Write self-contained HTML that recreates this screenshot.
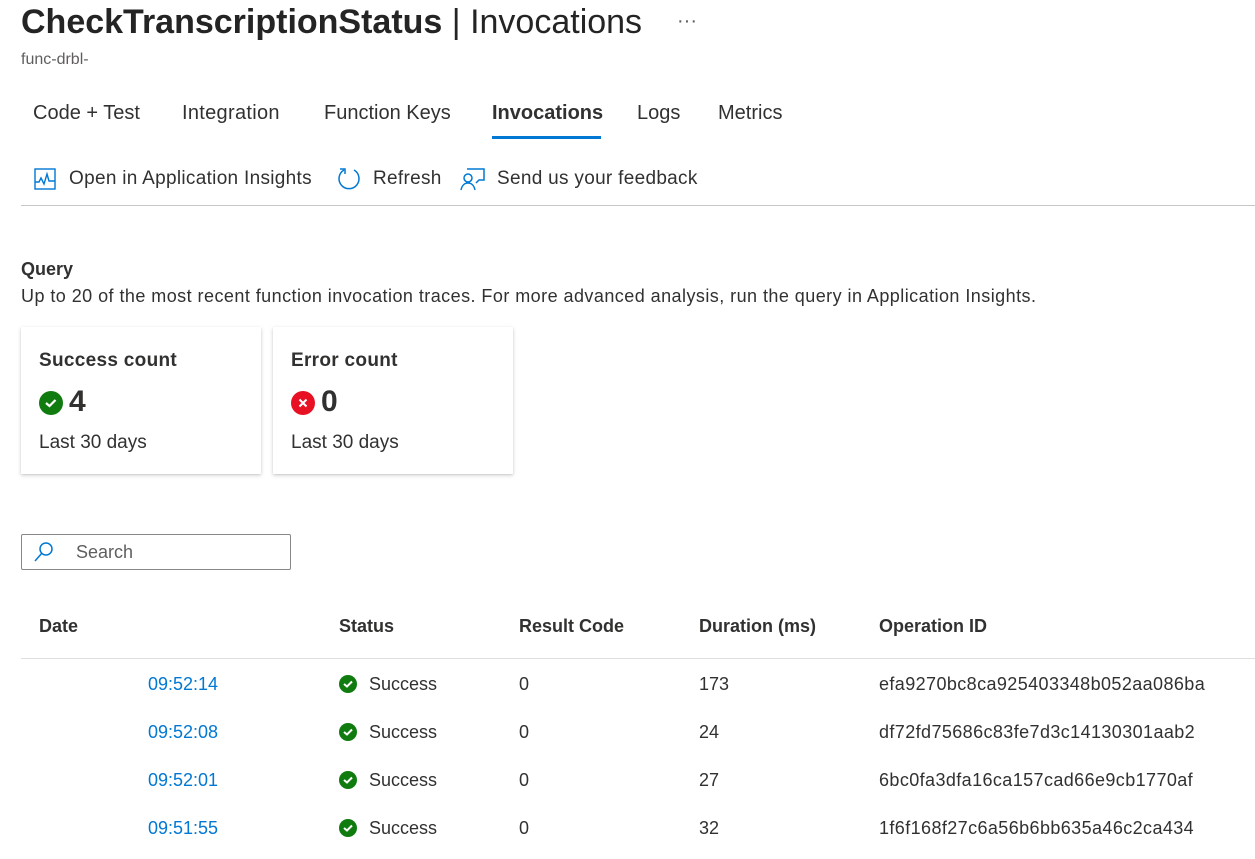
<!DOCTYPE html>
<html><head><style>
body{margin:0;width:1255px;height:859px;overflow:hidden;background:#fff;font-family:"Liberation Sans",sans-serif;color:#323130;position:relative}
.a{position:absolute;white-space:nowrap}
.card{position:absolute;top:327px;width:240px;height:147px;background:#fff;box-shadow:0 1.6px 4px rgba(0,0,0,.18),0 0.3px 1px rgba(0,0,0,.1)}
.t{font-size:19px;letter-spacing:0.3px}
.link{color:#0078d4}
</style></head><body>
<div class="a" style="left:21px;top:3px;font-size:34px;color:#242424"><b style="font-weight:600">CheckTranscriptionStatus</b> | Invocations</div>
<div class="a" style="left:677px;top:10px;font-size:20px;color:#605e5c">···</div>
<div class="a" style="left:21px;top:51px;font-size:16px;color:#605e5c">func-drbl-</div>
<div class="a" style="left:33px;top:102px;font-size:20px">Code + Test</div>
<div class="a" style="left:182px;top:102px;font-size:20px;letter-spacing:0.3px">Integration</div>
<div class="a" style="left:324px;top:102px;font-size:20px">Function Keys</div>
<div class="a" style="left:492px;top:102px;font-size:20px;font-weight:bold">Invocations</div>
<div style="position:absolute;left:492px;top:136px;width:109px;height:3px;background:#0078d4"></div>
<div class="a" style="left:637px;top:102px;font-size:20px">Logs</div>
<div class="a" style="left:718px;top:102px;font-size:20px">Metrics</div>
<svg class="a" style="left:33px;top:167px" width="24" height="24" viewBox="0 0 24 24" fill="none" stroke="#0078d4" stroke-width="1.4"><rect x="2" y="2" width="20" height="20"/><path d="M2 15h4l2-4 3 6 3-10 2 7h6"/></svg>
<div class="a t" style="left:69px;top:168px">Open in Application Insights</div>
<svg class="a" style="left:335px;top:165px" width="28" height="28" viewBox="0 0 28 28" fill="none" stroke="#0078d4" stroke-width="1.5"><path d="M9 5A10 10 0 1 0 19 5"/><path d="M5 4h5v5"/></svg>
<div class="a t" style="left:373px;top:168px">Refresh</div>
<svg class="a" style="left:458px;top:166px" width="28" height="26" viewBox="0 0 28 26" fill="none" stroke="#0078d4" stroke-width="1.5"><circle cx="10" cy="12" r="4"/><path d="M3 24c1-5 4-7 7-7s6 2 7 7"/><path d="M9 3h17v11h-5l-3 3"/></svg>
<div class="a t" style="left:497px;top:168px">Send us your feedback</div>
<div style="position:absolute;left:21px;top:205px;width:1234px;height:1px;background:#c8c6c4"></div>
<div class="a" style="left:21px;top:259px;font-size:18px;font-weight:bold">Query</div>
<div class="a" style="left:21px;top:286px;font-size:18px;letter-spacing:0.45px">Up to 20 of the most recent function invocation traces. For more advanced analysis, run the query in Application Insights.</div>
<div class="card" style="left:21px">
<div class="a" style="left:18px;top:23px;font-size:19px;font-weight:bold;letter-spacing:0.3px">Success count</div>
<svg class="a" style="left:18px;top:64px" width="24" height="24"><circle cx="12" cy="12" r="12" fill="#107c10"/><path d="M7 12l3.5 3 6-6" stroke="#fff" stroke-width="2.2" fill="none"/></svg>
<div class="a" style="left:48px;top:58px;font-size:30px;font-weight:bold">4</div>
<div class="a" style="left:18px;top:105px;font-size:19px">Last 30 days</div></div>
<div class="card" style="left:273px">
<div class="a" style="left:18px;top:23px;font-size:19px;font-weight:bold;letter-spacing:0.3px">Error count</div>
<svg class="a" style="left:18px;top:64px" width="24" height="24"><circle cx="12" cy="12" r="12" fill="#e81123"/><path d="M8.5 8.5l7 7M15.5 8.5l-7 7" stroke="#fff" stroke-width="2"/></svg>
<div class="a" style="left:48px;top:58px;font-size:30px;font-weight:bold">0</div>
<div class="a" style="left:18px;top:105px;font-size:19px">Last 30 days</div></div>
<div style="position:absolute;left:21px;top:534px;width:268px;height:34px;border:1px solid #8a8886;border-radius:2px"></div>
<svg class="a" style="left:33px;top:541px" width="22" height="22" fill="none" stroke="#0078d4" stroke-width="1.5"><circle cx="13" cy="8" r="6"/><path d="M9 12l-7 8"/></svg>
<div class="a" style="left:76px;top:542px;font-size:18px;color:#605e5c">Search</div>
<div class="a" style="left:39px;top:616px;font-size:18px;font-weight:bold">Date</div>
<div class="a" style="left:339px;top:616px;font-size:18px;font-weight:bold">Status</div>
<div class="a" style="left:519px;top:616px;font-size:18px;font-weight:bold">Result Code</div>
<div class="a" style="left:699px;top:616px;font-size:18px;font-weight:bold">Duration (ms)</div>
<div class="a" style="left:879px;top:616px;font-size:18px;font-weight:bold">Operation ID</div>
<div style="position:absolute;left:21px;top:658px;width:1234px;height:1px;background:#e1dfdd"></div>
<div class="a link" style="left:148px;top:674px;font-size:18px">09:52:14</div>
<div class="a link" style="left:148px;top:722px;font-size:18px">09:52:08</div>
<div class="a link" style="left:148px;top:770px;font-size:18px">09:52:01</div>
<div class="a link" style="left:148px;top:818px;font-size:18px">09:51:55</div>
<svg class="a" style="left:339px;top:675px" width="18" height="18"><circle cx="9" cy="9" r="9" fill="#107c10"/><path d="M5 9l3 2.5 5-5" stroke="#fff" stroke-width="2" fill="none"/></svg>
<svg class="a" style="left:339px;top:723px" width="18" height="18"><circle cx="9" cy="9" r="9" fill="#107c10"/><path d="M5 9l3 2.5 5-5" stroke="#fff" stroke-width="2" fill="none"/></svg>
<svg class="a" style="left:339px;top:771px" width="18" height="18"><circle cx="9" cy="9" r="9" fill="#107c10"/><path d="M5 9l3 2.5 5-5" stroke="#fff" stroke-width="2" fill="none"/></svg>
<svg class="a" style="left:339px;top:819px" width="18" height="18"><circle cx="9" cy="9" r="9" fill="#107c10"/><path d="M5 9l3 2.5 5-5" stroke="#fff" stroke-width="2" fill="none"/></svg>
<div class="a" style="left:369px;top:674px;font-size:18px">Success</div>
<div class="a" style="left:369px;top:722px;font-size:18px">Success</div>
<div class="a" style="left:369px;top:770px;font-size:18px">Success</div>
<div class="a" style="left:369px;top:818px;font-size:18px">Success</div>
<div class="a" style="left:519px;top:674px;font-size:18px">0</div>
<div class="a" style="left:519px;top:722px;font-size:18px">0</div>
<div class="a" style="left:519px;top:770px;font-size:18px">0</div>
<div class="a" style="left:519px;top:818px;font-size:18px">0</div>
<div class="a" style="left:699px;top:674px;font-size:18px">173</div>
<div class="a" style="left:699px;top:722px;font-size:18px">24</div>
<div class="a" style="left:699px;top:770px;font-size:18px">27</div>
<div class="a" style="left:699px;top:818px;font-size:18px">32</div>
<div class="a" style="left:879px;top:674px;font-size:18px;letter-spacing:0.4px">efa9270bc8ca925403348b052aa086ba</div>
<div class="a" style="left:879px;top:722px;font-size:18px;letter-spacing:0.4px">df72fd75686c83fe7d3c14130301aab2</div>
<div class="a" style="left:879px;top:770px;font-size:18px;letter-spacing:0.4px">6bc0fa3dfa16ca157cad66e9cb1770af</div>
<div class="a" style="left:879px;top:818px;font-size:18px;letter-spacing:0.4px">1f6f168f27c6a56b6bb635a46c2ca434</div>
</body></html>
